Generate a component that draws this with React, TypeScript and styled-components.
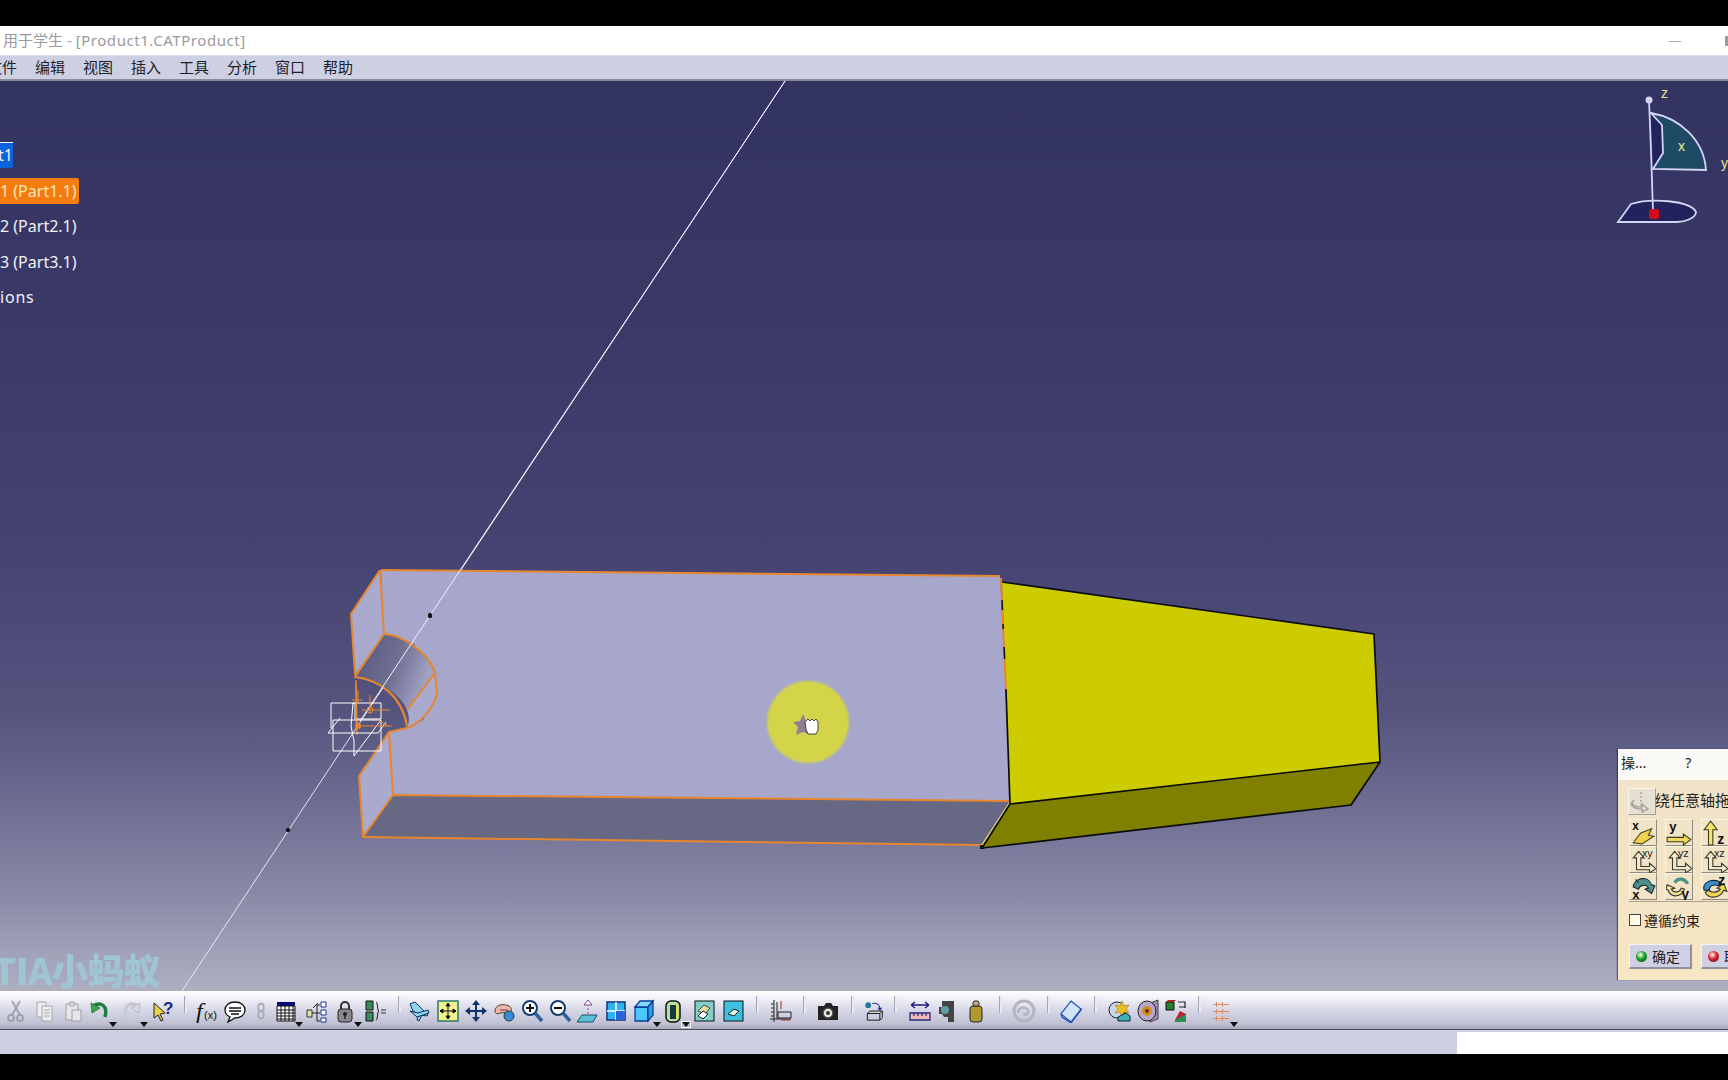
import React from "react";
import styled, {createGlobalStyle} from "styled-components";

const GlobalStyle = createGlobalStyle`
    html, body {
        margin: 0;
        padding: 0;
        background: #000;
        overflow: hidden;
    }
`;

const uiFont = `"Noto Sans", "Noto Sans CJK SC", sans-serif`;

const Page = styled.div`
    display: flex;
    flex-direction: column;
    width: 1728px;
    height: 1080px;
    overflow: hidden;
    background: #000;
    font-family: ${uiFont};
`;

const BlackBand = styled.div<{$h: number}>`
    flex: none;
    height: ${p => p.$h}px;
    background: #000;
`;

const TitleBar = styled.div`
    flex: none;
    position: relative;
    display: flex;
    align-items: center;
    height: 27px;
    padding: 0 0 2px 3px;
    background: #fff;
    color: #9a9a9a;
    font-size: 15px;
    white-space: pre;
`;

const TitleDoc = styled.span`
    letter-spacing: 0.56px;
`;

const WindowButtons = styled.div`
    position: absolute;
    top: 10px;
    right: 0;
    display: flex;
    align-items: center;
    gap: 44px;
`;

const MinButton = styled.div`
    width: 12px;
    height: 1px;
    background: #a8a8a8;
`;

const MaxButton = styled.div`
    width: 3px;
    height: 10px;
    background: #9c9c9c;
`;

const MenuBar = styled.div`
    flex: none;
    display: flex;
    align-items: center;
    gap: 18px;
    height: 23px;
    padding-bottom: 1px;
    background: #cdcfe3;
    border-bottom: 2px solid #8b8c99;
    box-shadow: inset 0 1px 0 #dcdeee;
    color: #1e1e2a;
    font-size: 15px;
`;

const MenuItem = styled.span`
    &:first-child {
        margin-left: -13px;
    }
`;

const Viewport = styled.div`
    position: relative;
    flex: 1;
    overflow: hidden;
    background: linear-gradient(to bottom,
        #333362 0%,
        #3a3968 28%,
        #444372 52%,
        #56557f 70%,
        #6f6e93 80%,
        #8c8ca9 90%,
        #afafc2 100%);
`;

const Scene = styled.svg`
    position: absolute;
    top: 0;
    left: 0;
    width: 1728px;
    height: 910px;
`;

const Tree = styled.div`
    position: absolute;
    top: 61px;
    left: 0;
    display: flex;
    flex-direction: column;
    align-items: flex-start;
    gap: 9.5px;
    font-size: 16px;
    line-height: 26px;
    white-space: nowrap;
`;

const TreeLabel = styled.div<{$state?: "root" | "active"; $wide?: boolean}>`
    height: 26px;
    padding-right: ${p => p.$state === "active" ? 2 : 0}px;
    margin-left: ${p => p.$state === "root" ? -2 : 0}px;
    background: ${p => p.$state === "root" ? "#0b63dc" : p.$state === "active" ? "#f47c0f" : "transparent"};
    box-shadow: ${p => p.$state === "root" ? "inset 0 1px 0 #fff" : "none"};
    border-radius: ${p => p.$state === "active" ? "0 2px 2px 0" : "0"};
    color: ${p => p.$state === "active" ? "#ffe7b8" : "#f2f2f6"};
    letter-spacing: ${p => p.$wide ? "0.8px" : "0"};
`;

const Watermark = styled.div`
    position: absolute;
    left: -7px;
    bottom: -1px;
    color: #9fc8d6;
    font-family: "Noto Sans CJK SC", sans-serif;
    font-size: 36.5px;
    font-weight: 900;
    line-height: 44px;
    letter-spacing: -0.5px;
    opacity: 0.9;
`;

/* dialog floats over the 3D view, runs off the right edge */
const Dialog = styled.div`
    position: absolute;
    top: 668px;
    left: 1618px;
    width: 124px;
    height: 231px;
    display: flex;
    flex-direction: column;
    background: #f3e5c6;
    box-shadow: -1px 0 1px rgba(30, 30, 50, 0.6);
    font-size: 15px;
    color: #222;
    overflow: hidden;
`;

const DialogTitle = styled.div`
    flex: none;
    display: flex;
    align-items: center;
    height: 26px;
    padding: 0 0 5px 3px;
    background: #fbfaf6;
    font-size: 14px;
`;

const HelpMark = styled.span`
    margin-left: 39px;
`;

const DialogBody = styled.div`
    flex: 1;
    display: flex;
    flex-direction: column;
    padding: 8px 0 0 11px;
    background: linear-gradient(to bottom, #f0e3c8, #f7e6c4);
`;

const ModeRow = styled.div`
    display: flex;
    align-items: center;
    height: 27px;
    white-space: nowrap;
    margin-left: -1px;
`;

const ModeText = styled.span`
    margin-bottom: 4px;
    margin-left: -2px;
`;

const ModeButton = styled.div`
    flex: none;
    display: flex;
    width: 28px;
    height: 27px;
    margin-right: 1px;
    background: #e6e0d2;
    border-top: 1px solid #f8f6ee;
    border-left: 1px solid #f8f6ee;
    border-right: 1px solid #a49e92;
    border-bottom: 1px solid #a49e92;
    box-sizing: border-box;
`;

const CommandGrid = styled.div`
    display: grid;
    grid-template-columns: repeat(3, 28px);
    grid-auto-rows: 27px;
    column-gap: 8px;
    margin-top: 4px;
    padding-bottom: 1px;
    border-bottom: 1px solid #aaa393;
`;

const CommandButton = styled.div`
    display: flex;
    background: #f1e4c6;
    border-top: 1px solid #fbf6e6;
    border-left: 1px solid #fbf6e6;
    border-right: 1px solid #8f8a7d;
    border-bottom: 1px solid #8f8a7d;
    box-sizing: border-box;
`;

const CheckRow = styled.div`
    display: flex;
    align-items: center;
    gap: 3px;
    margin-top: 6px;
    height: 24px;
    font-size: 14px;
`;

const CheckBox = styled.span`
    width: 10px;
    height: 10px;
    background: #fff9e6;
    border: 1px solid #444;
`;

const ButtonRow = styled.div`
    display: flex;
    gap: 9px;
    margin-top: 12px;
`;

const DialogButton = styled.div`
    flex: none;
    display: flex;
    align-items: center;
    gap: 5px;
    width: 63px;
    height: 25px;
    padding-left: 6px;
    box-sizing: border-box;
    background: #cfd0e4;
    border-top: 1px solid #f2f2f8;
    border-left: 1px solid #f2f2f8;
    border-right: 2px solid #8e8f9f;
    border-bottom: 2px solid #8e8f9f;
    font-size: 14px;
    white-space: nowrap;
`;

const Led = styled.span<{$tone: string}>`
    flex: none;
    width: 11px;
    height: 11px;
    border-radius: 50%;
    background: radial-gradient(circle at 40% 35%, #fff 0%, ${p => p.$tone} 45%, #222 110%);
`;

const Toolbar = styled.div`
    flex: none;
    display: flex;
    height: 38px;
    padding-left: 2px;
    background: linear-gradient(to bottom, #ffffff 0%, #f4f4fa 15%, #d3d4e4 55%, #c0c1d3 85%, #a7a8b9 100%);
    border-bottom: 1px solid #4b4b55;
`;

const Slot = styled.div<{$w: number}>`
    position: relative;
    flex: none;
    width: ${p => p.$w}px;
    display: flex;
    align-items: center;
    justify-content: center;
    padding-top: 1px;
`;

const Sep = styled.div<{$w: number}>`
    flex: none;
    width: ${p => p.$w}px;
    display: flex;
    justify-content: center;
    padding-top: 5px;
    &::after {
        content: "";
        width: 2px;
        height: 17px;
        background: #e9e9f1;
        border-left: 1px solid #a4a5b5;
    }
`;

const Drop = styled.span<{$boxed?: boolean}>`
    position: absolute;
    left: 50%;
    margin-left: 9px;
    bottom: 2px;
    width: 0;
    height: 0;
    border-left: 4px solid transparent;
    border-right: 4px solid transparent;
    border-top: 5px solid #111;
    outline: ${p => p.$boxed ? "1px solid #fff" : "none"};
`;

const StatusBar = styled.div`
    flex: none;
    display: flex;
    justify-content: flex-end;
    height: 24px;
    background: #cdcfe3;
`;

const StatusField = styled.div`
    width: 271px;
    margin-top: 2px;
    background: #fff;
`;

const Ico = ({children, size = 24}: {children: React.ReactNode; size?: number}) => (
    <svg width={size} height={size} viewBox="0 0 24 24" fill="none">{children}</svg>
);

type Tool = {icon: React.ReactNode; w: number; drop?: "d" | "b"};

const toolGroups: {sep: number; tools: Tool[]}[] = [
    {sep: 18, tools: [
        {w: 29, icon: <g stroke="#9a9aa2" strokeWidth="1.6"><path d="M7 2l8 14M15 2L7 16"/><circle cx="6" cy="19" r="3"/><circle cx="15" cy="19" r="3"/></g>},
        {w: 28, icon: <g fill="#eceded" stroke="#a6a6ae"><path d="M4 3h9v15H4z"/><path d="M9 7h10v15H9z"/><path d="M11 11h6M11 14h6M11 17h6"/></g>},
        {w: 28, icon: <g fill="#e5e5ea" stroke="#a0a0a8"><path d="M5 5h12v16H5z"/><path d="M9 3h4v4H9z"/><path d="M11 11h9v11h-9z"/></g>},
        {w: 26, drop: "d", icon: <g><path d="M5 7c8-5 15 0 12 11" stroke="#1e7d3a" strokeWidth="3.5"/><path d="M3 4l1 10 8-5z" fill="#37a852" stroke="#145a28" strokeWidth=".7"/></g>},
        {w: 36, drop: "d", icon: <g><path d="M19 7C11 2 4 7 7 18" stroke="#c7c8d2" strokeWidth="3.5"/><path d="M21 4l-1 10-8-5z" fill="#d8d9e2" stroke="#a8a9b5" strokeWidth=".7"/></g>},
        {w: 27, icon: <g><path d="M3 4l11 10-5 1 3 6-2 1-3-6-4 3z" fill="#e8d04a" stroke="#222" strokeWidth="1"/><text x="12" y="15" fill="#15258c" fontSize="17" fontWeight="700" fontFamily="Liberation Sans">?</text></g>},
    ]},
    {sep: 14, tools: [
        {w: 26, icon: <g fill="#111"><text x="1" y="20" fontSize="24" fontStyle="italic" fontFamily="Liberation Serif">f</text><text x="9" y="20" fontSize="11" fontFamily="Liberation Sans">(x)</text></g>},
        {w: 30, icon: <path d="M12 3c6 0 10 3.500 10 8s-4 8-10 8l-7 4 2-5c-3-1.500-5-4-5-7 0-4.500 4-8 10-8z M6 9h12M6 12h12M8 15h8" fill="#fff" stroke="#111" strokeWidth="1.300"/>},
        {w: 22, icon: <g stroke="#a7a8b3" strokeWidth="1.800"><rect x="9" y="4" width="6" height="8" rx="3"/><rect x="9" y="12" width="6" height="8" rx="3"/></g>},
        {w: 28, drop: "d", icon: <g><path d="M3 3h18v4H3z" fill="#0a0a80"/><path d="M3 7h18v15H3z" fill="#fff" stroke="#111"/><path d="M7 7v15M11 7v15M15 7v15M19 7v15M3 11h18M3 14h18M3 17h18M3 20h18" stroke="#111"/></g>},
        {w: 32, icon: <g strokeWidth="1"><path d="M3 11h5v7H3z" fill="#e2e2a0" stroke="#333"/><path d="M8 14h5M13 14V6h3M13 14v8h3M13 14h3M9 9l5-5" stroke="#222"/><path d="M17 3h5v5h-5zM17 11h5v5h-5zM17 19h5v4h-5z" fill="#fff" stroke="#1a2ea8"/></g>},
        {w: 26, drop: "d", icon: <g><path d="M8 10V7a4 4 0 018 0v3" stroke="#333" strokeWidth="2"/><rect x="5" y="10" width="14" height="13" rx="3" fill="#88888e" stroke="#222"/><circle cx="12" cy="15" r="2" fill="#222"/><path d="M12 15v5" stroke="#222" strokeWidth="1.500"/></g>},
        {w: 34, icon: <g><path d="M3 2h7v9H3zM3 13h7v9H3z" fill="#3a8a60" stroke="#111"/><path d="M13 3c2 0 1 9 3 9-2 0-1 9-3 9" stroke="#111"/><path d="M18 11h5M18 14h5" stroke="#333"/></g>},
    ]},
    {sep: 22, tools: [
        {w: 28, icon: <g fill="#8fd6ec" stroke="#10305a"><path d="M2 5l5-2 13 13-2 1-4-1-3 6-2-1 1-6-5-3z"/><path d="M2 12l8 2 10-3 1 3-12 4z"/></g>},
        {w: 28, icon: <g><rect x="2" y="2" width="20" height="20" fill="#f3f08e" stroke="#2d7a6a" strokeWidth="1.500"/><path d="M12 4v16M4 12h16M12 4l-2 3h4zM12 20l-2-3h4zM4 12l3-2v4zM20 12l-3-2v4z" fill="#111" stroke="#111"/></g>},
        {w: 28, icon: <path d="M12 1l4 5h-3v5h5V8l5 4-5 4v-3h-5v5h3l-4 5-4-5h3v-5H6v3l-5-4 5-4v3h5V6H8z" fill="#13336e"/>},
        {w: 28, icon: <g><path d="M3 12c0-6 8-8 14-5 3 2 3 5 1 6l-10 1c-3 2-5 0-5-2z" fill="#f0b8b4" stroke="#442"/><circle cx="17" cy="17" r="5" fill="#3b8ad8" stroke="#143"/><path d="M8 11h8" stroke="#822"/></g>},
        {w: 28, icon: <g><circle cx="10" cy="9" r="7" fill="#fff" stroke="#123c6e" strokeWidth="2"/><path d="M15 14l7 8" stroke="#2a6496" strokeWidth="3.500"/><path d="M6 9h8M10 5v8" stroke="#111" strokeWidth="2"/></g>},
        {w: 28, icon: <g><circle cx="10" cy="9" r="7" fill="#fff" stroke="#123c6e" strokeWidth="2"/><path d="M15 14l7 8" stroke="#2a6496" strokeWidth="3.500"/><path d="M6 9h8" stroke="#111" strokeWidth="2"/></g>},
        {w: 28, icon: <g><path d="M6 16h15l-4 7H1z" fill="#5cc0d6" stroke="#15506a"/><path d="M12 15V5" stroke="#a04090" strokeDasharray="2 2"/><path d="M12 1l4 5H8z" fill="#fff" stroke="#884488"/></g>},
        {w: 28, icon: <g><rect x="3" y="3" width="18" height="18" fill="#2fb2f2" stroke="#12307a" strokeWidth="1.500"/><path d="M12 3v18M3 12h18" stroke="#fff" strokeWidth="1.500"/><path d="M12 12h9v9h-9z" fill="#2a62d8"/></g>},
        {w: 28, drop: "d", icon: <g fill="#4cc8f8" stroke="#0e3a9a" strokeWidth="1.300"><path d="M3 8h13v14H3z"/><path d="M3 8l5-6h13l-5 6z" fill="#7fdcfb"/><path d="M16 8l5-6v14l-5 6z" fill="#2a9fe8"/></g>},
        {w: 30, drop: "b", icon: <g><rect x="5" y="2" width="14" height="21" rx="5" fill="#b8e0a0" stroke="#111" strokeWidth="1.500"/><path d="M9 6h6v14H9z" fill="#123a40"/><path d="M15 6h2v13h-2z" fill="#e6e03c"/></g>},
        {w: 32, icon: <g><rect x="3" y="2" width="19" height="20" fill="#7ed0c8" stroke="#111"/><path d="M6 12l6-6 6 3-5 6z" fill="#e6dc9c" stroke="#444"/><path d="M6 17l5-5 5 3-5 5z" fill="#fff" stroke="#222"/></g>},
        {w: 26, icon: <g><rect x="3" y="2" width="19" height="20" fill="#3fc0e0" stroke="#111"/><path d="M7 15l6-5 5 2-5 5z" fill="#dff0d8" stroke="#123"/></g>},
    ]},
    {sep: 24, tools: [
        {w: 24, icon: <g stroke="#222"><path d="M6 1v22M9 3v17M3 5h3M3 9h3M3 13h3M3 17h3M2 20h21M10 13h13v6H10z"/><path d="M13 2v8" stroke="#b02828"/><path d="M13 21h9" stroke="#b02828"/></g>},
    ]},
    {sep: 24, tools: [
        {w: 24, icon: <g><path d="M2 7h6l2-3h5l2 3h5v14H2z" fill="#222"/><circle cx="12" cy="14" r="5" fill="#e8e8e8" stroke="#444" strokeWidth="1.500"/><circle cx="12" cy="14" r="2" fill="#333"/></g>},
    ]},
    {sep: 22, tools: [
        {w: 20, icon: <g><circle cx="5" cy="5" r="3.500" fill="#1f7aa0"/><path d="M10 3c6-1 9 2 9 6" stroke="#222fa0" strokeWidth="1.300"/><path d="M16 8h6l-3 4z" fill="#222fa0"/><path d="M4 15l3-3h15v8l-3 3H4zM4 15h15v8M19 15l3-3" stroke="#222" strokeWidth="1.200"/></g>},
    ]},
    {sep: 20, tools: [
        {w: 28, icon: <g stroke="#1a1a80" strokeWidth="1.300"><path d="M3 6h18M3 6l4-3M3 6l4 3M21 6l-4-3M21 6l-4 3"/><path d="M2 14h20v7H2z" fill="#f0b8b8" stroke="#222a7a"/><path d="M6 14v3M10 14v3M14 14v3M18 14v3" stroke="#222a7a"/></g>},
        {w: 28, icon: <g><path d="M6 2h12v21h-6v-5H8l-2-3H3V8h3z" fill="#444"/><circle cx="9" cy="11" r="4" fill="#5f9ea8"/></g>},
        {w: 28, icon: <g><rect x="6" y="7" width="12" height="16" rx="3" fill="#b09a30" stroke="#222"/><rect x="9" y="2" width="6" height="5" rx="2" fill="#c0b080" stroke="#222"/></g>},
    ]},
    {sep: 20, tools: [
        {w: 28, icon: <g stroke="#b4b5c0" strokeWidth="3"><circle cx="12" cy="12" r="10"/><path d="M6 14c0-5 5-7 9-4 3 3 0 7-4 5" stroke="#b4b5c0" strokeWidth="2.500"/></g>},
    ]},
    {sep: 22, tools: [
        {w: 26, icon: <g stroke="#1a50b8" strokeWidth="1.200"><path d="M12 2l10 8-10 13L2 15z" fill="#cfe2f6"/><path d="M2 15l1 3 9 6 10-13v-2"/></g>},
    ]},
    {sep: 18, tools: [
        {w: 28, icon: <g><circle cx="9" cy="11" r="8" fill="#c8d8e8" stroke="#222"/><path d="M14 2l2 5 5-1-3 4 3 4-5-1-2 5-2-5-5 1 3-4-3-4 5 1z" fill="#f0c020" stroke="#a07010" strokeWidth=".6"/><path d="M10 18l8-4 4 3v5H10z" fill="#3fb0b8" stroke="#123"/></g>},
        {w: 28, icon: <g><path d="M14 4l8-3v19l-8 3z" fill="#a08cc0" stroke="#443"/><ellipse cx="11" cy="12" rx="9" ry="10" fill="#b8a8c8" stroke="#222"/><circle cx="11" cy="12" r="5" fill="#d09020"/><circle cx="11" cy="12" r="2" fill="#702828"/></g>},
        {w: 28, icon: <g><path d="M2 3h8v8H2z" fill="#28802f" stroke="#111"/><path d="M2 3l2-2h8l-2 2z" fill="#b02828"/><path d="M14 3h7v6M21 8h-6" stroke="#223" strokeWidth="1.200"/><path d="M11 21l5-9 6 3v8H11z" fill="#c02030"/><path d="M11 21l11-6v8H11z" fill="#28904a"/></g>},
    ]},
    {sep: 0, tools: [
        {w: 26, drop: "d", icon: <g fill="#e08a60"><path d="M4 5h16v1H4zM4 12h16v1H4zM4 19h16v1H4z"/><path d="M8 3v5H7V3zM14 3v5h-1V3zM8 10v5H7v-5zM14 10v5h-1v-5zM8 17v5H7v-5zM14 17v5h-1v-5z"/></g>},
    ]},
];

const commandIcons: React.ReactNode[] = [
    <g><text x="2" y="9" fontSize="11" fontWeight="700" fill="#111" fontFamily="Liberation Sans">x</text><path d="M3 21l7-9 10-4-3 6 5 1-11 7z" fill="#efd24e" stroke="#4a4020"/></g>,
    <g><text x="3" y="10" fontSize="12" fontWeight="700" fill="#111" fontFamily="Liberation Sans">y</text><path d="M1 16h15v-3l7 5-7 5v-3H1z" fill="#f0d860" stroke="#3d3d20"/></g>,
    <g><path d="M8 1l6 8h-4v14H6V9H2z" fill="#f3e26c" stroke="#3b3b20"/><text x="14" y="22" fontSize="13" fontWeight="700" fill="#111" fontFamily="Liberation Sans">z</text></g>,
    <g><path d="M8 4l5 6h-3v8h8v-3l6 5-6 4v-3H6V10H3z" fill="#f0e8d0" stroke="#3a3a28"/><text x="11" y="9" fontSize="10" fill="#222" fontFamily="Liberation Sans">xy</text></g>,
    <g><path d="M8 4l5 6h-3v8h8v-3l6 5-6 4v-3H6V10H3z" fill="#f0e8d0" stroke="#3a3a28"/><text x="11" y="9" fontSize="10" fill="#222" fontFamily="Liberation Sans">yz</text></g>,
    <g><path d="M8 4l5 6h-3v8h8v-3l6 5-6 4v-3H6V10H3z" fill="#f0e8d0" stroke="#3a3a28"/><text x="11" y="9" fontSize="10" fill="#222" fontFamily="Liberation Sans">xz</text></g>,
    <g><path d="M3 12c1-9 14-11 17-2l3 1-3 7-6-4 3-1c-2-4-8-3-9 1z" fill="#4a9088" stroke="#223"/><path d="M5 5l3 3" stroke="#333"/><text x="2" y="23" fontSize="12" fontWeight="700" fill="#111" fontFamily="Liberation Sans">x</text></g>,
    <g><path d="M1 10l7 3-3 1c2 4 8 3 9-1l3 1c-2 7-12 9-15 1l-2-1z" fill="#f0e090" stroke="#333"/><path d="M8 8c3-5 9-4 12 1" stroke="#4a9088" strokeWidth="3"/><text x="14" y="23" fontSize="13" fontWeight="700" fill="#111" fontFamily="Liberation Sans">y</text></g>,
    <g><path d="M2 15c-2-7 6-11 14-8v4c-6-2-10 0-9 4z" fill="#3a90c8" stroke="#123"/><path d="M3 17c4 7 14 5 17-2l3 1-3-7-6 4 3 1c-2 3-8 4-11 1z" fill="#efd84e" stroke="#333"/><text x="15" y="10" fontSize="13" fontWeight="700" fill="#111" fontFamily="Liberation Sans">z</text></g>,
];

const Part = () => (
    <g>
        {/* selected part */}
        <polygon points="381,570 1000,576 1011,801 393,795 389,732 407,728 423,720 437,693 435,673 413,643 384,634" fill="#a6a7cb"/>
        <polygon points="380,570 351,614 355,675 384,634" fill="#a9aacd"/>
        <polygon points="389,732 359,776 363,837 393,795" fill="#a9aacd"/>
        <polygon points="393,795 363,837 982,845 1011,801" fill="#666884"/>
        <defs>
            <linearGradient id="bore" x1="0" y1="0" x2="1" y2="0.35">
                <stop offset="0" stopColor="#55567e"/>
                <stop offset="0.55" stopColor="#6e6f90"/>
                <stop offset="1" stopColor="#a3a4c6"/>
            </linearGradient>
            <filter id="soft"><feGaussianBlur stdDeviation="1.2"/></filter>
        </defs>
        <path d="M384 634 C398 634 428 650 435 673 L407 710 C402 696 380 680 357 677 Z" fill="url(#bore)"/>
        <path d="M435 673 L437 693 C434 708 420 724 407 728 C410 720 409 716 407 710 Z" fill="#a9aacd"/>
        <g stroke="#e8862e" strokeWidth="2" fill="none" strokeLinejoin="round">
            <path d="M381 570 L1000 576"/>
            <path d="M380 570 L351 614 L355 675"/>
            <path d="M380 570 L384 634 C398 634 428 650 435 673 L437 693 C434 708 420 724 407 728 L389 732 L393 795"/>
            <path d="M384 634 L355 677 C380 680 402 696 407 726"/>
            <path d="M435 673 L407 710"/>
            <path d="M389 732 L359 776 L363 837 L393 795 L1011 801"/>
            <path d="M363 837 L982 845"/>
            <path d="M356 680 L357 735" strokeWidth="1.500"/>
        </g>
        <path d="M982 845 L1010 802" stroke="#e9cf6a" strokeWidth="1.500"/>
        {/* the other part */}
        <polygon points="1002,582 1374,634 1380,762 1010,804" fill="#cccc00"/>
        <polygon points="1010,804 1380,762 1351,805 982,848" fill="#808000"/>
        <g stroke="#0a0a0a" strokeWidth="1.700" fill="none" strokeLinejoin="round">
            <path d="M1002 582 L1374 634 L1380 762 L1010 804"/>
            <path d="M1006 690 L1010 804 L982 848 L1351 805 L1380 762"/>
        </g>
        <path d="M1001 578 L1006 690" stroke="#e8862e" strokeWidth="2"/>
        <path d="M1002 600 L1006 690" stroke="#111" strokeWidth="1.500" strokeDasharray="10 14 5 18 12 30"/>
        <rect x="980" y="845" width="4" height="4" fill="#111"/>
    </g>
);

const Anchor = () => (
    <g>
        <g stroke="#fff" strokeWidth="1" fill="none">
            <path d="M331 703 H355 V719 H381 V703 H353"/>
            <path d="M333 720 H381 V751 H333 Z"/>
            <path d="M331 703 V728"/>
            <path d="M353 703 L351 726 L354 741 L354 756 L381 720"/>
            <path d="M328 733 L340 718 M328 733 H378 L386 722"/>
        </g>
        <g stroke="#e9872f" strokeWidth="1" fill="none">
            <path d="M356 683 V724 M358 690 V703 M352 700 H362"/>
            <path d="M370 695 V713 M362 710 H390"/>
            <path d="M357 726 H392 M378 720 L388 726"/>
        </g>
        <circle cx="358" cy="726" r="3" fill="#e9872f"/>
        <circle cx="370" cy="710" r="3" fill="none" stroke="#e9872f"/>
    </g>
);

const Compass = () => (
    <g>
        <path d="M1651 113 C1680 118 1704 140 1706 170 L1653 169 L1663 153 L1662 125 Z" fill="#1f4a66"/>
        <path d="M1651 113 L1662 125 L1663 153 L1653 169 Z" fill="#22225c"/>
        <path d="M1631 204 C1650 198 1690 200 1696 212 C1696 218 1685 222 1677 222 L1618 222 Z" fill="#22225c"/>
        <g stroke="#d4d4f4" strokeWidth="1.800" fill="none">
            <path d="M1649 100 L1651 150 L1653 212"/>
            <path d="M1651 113 C1680 118 1704 140 1706 170 L1653 169 L1663 153 L1662 125 Z"/>
            <path d="M1631 204 C1650 198 1690 200 1696 212 C1696 218 1685 222 1677 222 L1618 222 Z"/>
        </g>
        <circle cx="1649" cy="100" r="3.500" fill="#d4d4f4"/>
        <rect x="1649" y="209" width="10" height="10" rx="2" fill="#d00d18"/>
        <g fill="#e8e88a" fontFamily="Liberation Sans" fontSize="14">
            <text x="1661" y="98">z</text>
            <text x="1678" y="151">x</text>
            <text x="1721" y="168">y</text>
        </g>
    </g>
);

const Cursor = () => (
    <g>
        <circle cx="808" cy="722" r="41" fill="#d4d448" filter="url(#soft)"/>
        <path d="M803 714 L806 721 L814 722 L809 728 L811 735 L803 732 L796 735 L798 727 L793 722 L800 721 Z" fill="#8f7f96"/>
        <path d="M805 722 L808 719 L810 721 L812 719 L814 721 L816 719 L818 722 L818 730 L816 734 L808 734 L806 729 Z" fill="#fff" stroke="#222" strokeWidth="0.800"/>
    </g>
);

const App = () => (
    <Page>
        <GlobalStyle/>
        <BlackBand $h={26}/>
        <TitleBar>
            用于学生 - <TitleDoc>[Product1.CATProduct]</TitleDoc>
            <WindowButtons>
                <MinButton/>
                <MaxButton/>
            </WindowButtons>
        </TitleBar>
        <MenuBar>
            {["文件", "编辑", "视图", "插入", "工具", "分析", "窗口", "帮助"].map(m => <MenuItem key={m}>{m}</MenuItem>)}
        </MenuBar>
        <Viewport>
            <Scene viewBox="0 81 1728 910">
                <path d="M785 81 L182 991" stroke="#e6e6f0" strokeWidth="1"/>
                <Part/>
                <path d="M785 81 L360 721" stroke="#f2f2f8" strokeWidth="1"/>
                <Anchor/>
                <g fill="#111">
                    <rect x="428" y="613" width="4" height="5" rx="1.500"/>
                    <rect x="286" y="828" width="4" height="4" rx="1.500"/>
                </g>
                <Compass/>
                <Cursor/>
            </Scene>
            <Tree>
                <TreeLabel $state="root">t1</TreeLabel>
                <TreeLabel $state="active">1 (Part1.1)</TreeLabel>
                <TreeLabel>2 (Part2.1)</TreeLabel>
                <TreeLabel>3 (Part3.1)</TreeLabel>
                <TreeLabel $wide>ions</TreeLabel>
            </Tree>
            <Watermark>TIA小蚂蚁</Watermark>
            <Dialog>
                <DialogTitle>操...<HelpMark>?</HelpMark></DialogTitle>
                <DialogBody>
                    <ModeRow>
                        <ModeButton>
                            <Ico>
                                <g stroke="#a8a49a" strokeWidth="1.500">
                                    <path d="M12 3v14" strokeDasharray="2 2"/>
                                    <path d="M5 11c-4 4 0 7 8 7v-3l6 5-6 3v-3c-9 0-14-5-8-9z" fill="#e0dccf"/>
                                </g>
                            </Ico>
                        </ModeButton>
                        <ModeText>绕任意轴拖动</ModeText>
                    </ModeRow>
                    <CommandGrid>
                        {commandIcons.map((icon, i) => (
                            <CommandButton key={i}><Ico size={26}>{icon}</Ico></CommandButton>
                        ))}
                    </CommandGrid>
                    <CheckRow><CheckBox/>遵循约束</CheckRow>
                    <ButtonRow>
                        <DialogButton><Led $tone="#12a422"/>确定</DialogButton>
                        <DialogButton><Led $tone="#d8202a"/>取消</DialogButton>
                    </ButtonRow>
                </DialogBody>
            </Dialog>
        </Viewport>
        <Toolbar>
            {toolGroups.map((group, g) => (
                <React.Fragment key={g}>
                    {group.tools.map((tool, i) => (
                        <Slot key={i} $w={tool.w}>
                            <Ico>{tool.icon}</Ico>
                            {tool.drop && <Drop $boxed={tool.drop === "b"}/>}
                        </Slot>
                    ))}
                    {group.sep > 0 && <Sep $w={group.sep}/>}
                </React.Fragment>
            ))}
        </Toolbar>
        <StatusBar><StatusField/></StatusBar>
        <BlackBand $h={26}/>
    </Page>
);

export default App;
